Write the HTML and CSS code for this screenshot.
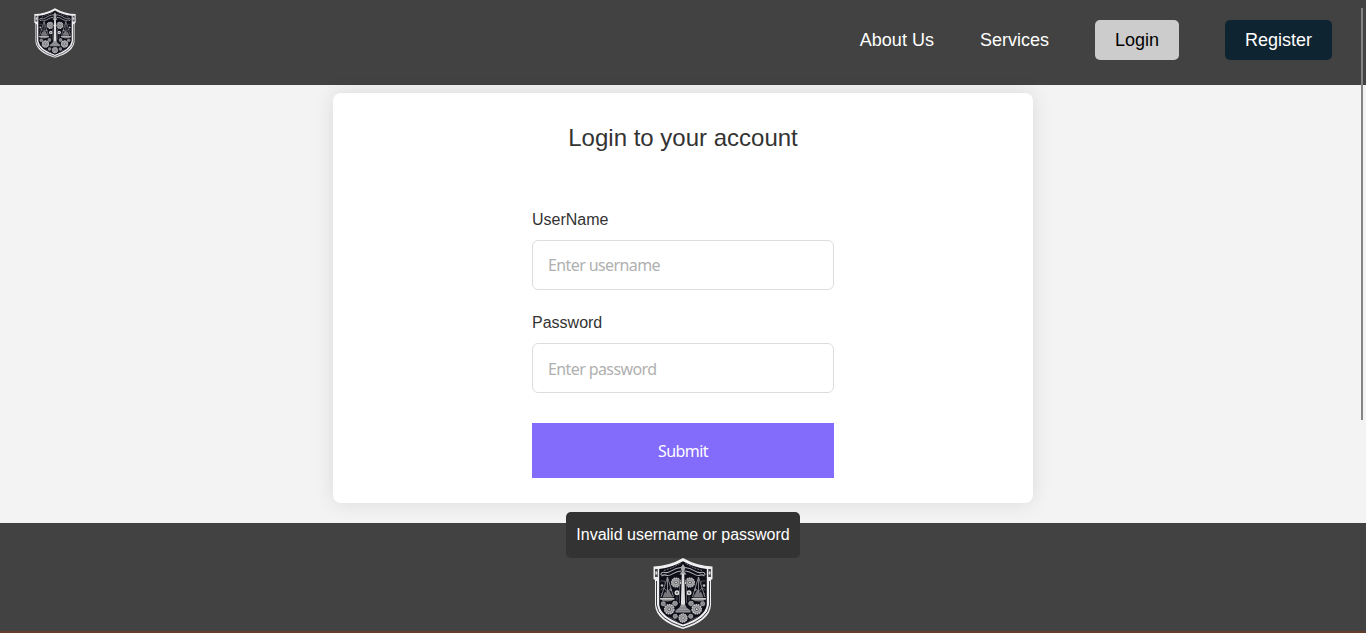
FILE: index.html
```html
<!DOCTYPE html>
<html lang="en">
<head>
<meta charset="utf-8">
<title>Login</title>
<link rel="stylesheet" href="styles.css">
</head>
<body>
<svg class="defs" width="0" height="0" aria-hidden="true">
  <symbol id="gear" viewBox="-5 -5 10 10">
    <circle r="4" fill="#8a8a8e" stroke="#c4c4c7" stroke-width="1.3" stroke-dasharray="1.5 .5"/>
    <circle r="2.1" fill="#4a4a51" stroke="#c4c4c7" stroke-width=".8"/>
    <circle r=".9" fill="#ddd"/>
  </symbol>
  <symbol id="half" viewBox="0 0 60 71" overflow="visible">
    <path d="M8 17Q8 13.5 12 14.5C17 16 19 10 28 9.5M8.5 18Q11 16 14 17.5C19 18 21 13 28 13" fill="none" stroke="#b0b0b4" stroke-width="1.1"/>
    <path d="M11 12.5 20 9.5 28 5" fill="none" stroke="#77777c" stroke-width="1" stroke-dasharray="2 1"/>
    <path d="M14.5 19 8 39M14.5 19v20M14.5 19l6 20M11 30l7 8M18 30l-7 8" fill="none" stroke="#a2a2a7" stroke-width=".8"/>
    <path d="M9.5 39.5l2.5-6 2 2 1.5-4 4.500 8z" fill="#77777c"/>
    <path d="M7.500 41H21Q19 43.500 14 43.500T7.500 41Z" fill="#777"/>
    <path d="M7 40.800H21.500" stroke="#e6e6e8" stroke-width="1.300"/>
    <use href="#gear" x="17.500" y="19" width="11" height="11"/>
    <circle cx="24" cy="34.700" r="2.500" fill="#d8d8da"/><circle cx="24" cy="34.700" r="1" fill="#666"/>
    <use href="#gear" x="10.500" y="45.500" width="11.500" height="11.500"/>
    <use href="#gear" x="19" y="42.500" width="6" height="6"/>
    <use href="#gear" x="7.500" y="43" width="5.500" height="5.500"/>
    <use href="#gear" x="19.500" y="55.500" width="5.500" height="5.500"/>
    <path d="M7.500 23h4l1 3M7.500 32l3-2M8 35l2 2M24 38.500v4M26.500 21v24M15 59l5 2 6 4" fill="none" stroke="#66666c" stroke-width=".8"/>
    <circle cx="9" cy="27.500" r="1.300" fill="#bbb"/><circle cx="18" cy="32" r="1" fill="#999"/>
  </symbol>
  <symbol id="crest" viewBox="0 0 60 71">
    <path d="M30 0Q16 8 .5 8.500V21L2 22V47Q3 63 30 71 57 63 58 47V22L59.500 21V8.500Q44 8 30 0Z" fill="#efeff1"/>
    <path d="M3.500 23V47Q5 61 30 69 55 61 56.500 47V23" fill="none" stroke="#25252d" stroke-width=".9"/>
    <path d="M30 3.200Q19 9.500 6.200 11V47Q8 59 30 66.500 52 59 53.800 47V11Q41 9.500 30 3.200Z" fill="#0e0e18"/>
    <path d="M2 11h2.800v8H2zM55.200 11H58v8h-2.800z" fill="#4a4a50"/>
    <path d="M2.500 13.500h1.800v3H2.500zM55.700 13.500h1.800v3h-1.800z" fill="#ddd"/>
    <use href="#half" width="60" height="71"/>
    <use href="#half" width="60" height="71" transform="translate(60) scale(-1 1)"/>
    <path d="M30 6 32.300 9.500 31.300 13.500 33.500 16.500H26.500L28.700 13.500 27.700 9.500Z" fill="#aaaaae"/>
    <path d="M28.800 16h2.400l.9 31h-4.200z" fill="#e0e0e2"/>
    <path d="M28 46.500h4l1.500 3 4 3v2h-15v-2l4-3Z" fill="#9b9b9f"/>
    <path d="M26 50h8M23 52.700h14" stroke="#66666b" stroke-width=".7"/>
    <use href="#gear" x="25" y="55" width="10" height="10"/>
  </symbol>
</svg>
<header class="topbar">
  <svg class="logo"><use href="#crest"/></svg>
  <nav class="nav">
    <a class="link">About Us</a>
    <a class="link">Services</a>
    <a class="btn btn-login">Login</a>
    <a class="btn btn-register">Register</a>
  </nav>
</header>
<main class="content">
  <section class="card">
    <h1 class="title">Login to your account</h1>
    <form class="form">
      <label class="label" for="user">UserName</label>
      <input class="input" id="user" type="text" placeholder="Enter username">
      <label class="label" for="pass">Password</label>
      <input class="input input-password" id="pass" type="password" placeholder="Enter password">
      <button class="submit" type="button">Submit</button>
    </form>
  </section>
</main>
<footer class="footer"><svg class="footer-logo"><use href="#crest"/></svg></footer>
<div class="toast">Invalid username or password</div>
<div class="scroll-thumb"></div>
</body>
</html>
```
FILE: styles.css
```css
* { box-sizing: border-box; }
body {
  margin: 0;
  height: 633px;
  overflow: hidden;
  display: flex;
  flex-direction: column;
  background: #f3f3f3;
  font-family: "Liberation Sans", Arial, sans-serif;
  font-size: 16px;
  color: #333;
}
.defs { position: absolute; }
.topbar {
  height: 85px;
  flex: none;
  display: flex;
  justify-content: space-between;
  align-items: flex-start;
  padding: 8px 34px 0;
  background: #424242;
}
.logo { width: 42px; height: 50px; }
.nav {
  display: flex;
  align-items: center;
  gap: 46px;
  height: 40px;
  margin-top: 12px;
  font-size: 18px;
  color: #fff;
}
.btn { height: 40px; padding: 0 20px; line-height: 40px; border-radius: 5px; }
.btn-login { background: #ccc; color: #000; }
.btn-register { background: #0f2431; }
.content { height: 438px; flex: none; padding-top: 8px; }
.card {
  width: 700px;
  height: 410px;
  margin: 0 auto;
  padding-top: 30px;
  background: #fff;
  border-radius: 8px;
  box-shadow: 0 0 20px rgba(0, 0, 0, .1);
}
.title { margin: 0; font-size: 24px; line-height: 30px; font-weight: 400; text-align: center; }
.form { width: 302px; margin: 56px auto 0; display: flex; flex-direction: column; }
.label { height: 31px; line-height: 22px; }
.input {
  height: 50px;
  margin-bottom: 22px;
  padding: 0 15px;
  border: 1px solid #ddd;
  border-radius: 6px;
  background: #fff;
  font: 16px "Noto Sans", sans-serif;
  letter-spacing: -.6px;
}
.input-password { padding-top: 2px; }
.input::placeholder { color: #b0b0b0; opacity: 1; }
.submit {
  height: 55px;
  margin-top: 8px;
  border: 0;
  background: #836bfb;
  color: #fff;
  font: 16px "Noto Sans", sans-serif;
  letter-spacing: -.6px;
}
.footer {
  flex: 1;
  display: flex;
  justify-content: center;
  align-items: flex-start;
  padding-top: 35px;
  background: #424242;
  border-bottom: 2px solid #633d2a;
}
.footer-logo { width: 60px; height: 71px; }
.toast {
  position: absolute;
  left: 566px;
  top: 512px;
  width: 234px;
  height: 46px;
  line-height: 45px;
  text-align: center;
  border-radius: 5px;
  background: #333;
  color: #fff;
}
.scroll-thumb { position: absolute; left: 1361px; top: 8px; width: 2px; height: 412px; background: #858585; }
```
